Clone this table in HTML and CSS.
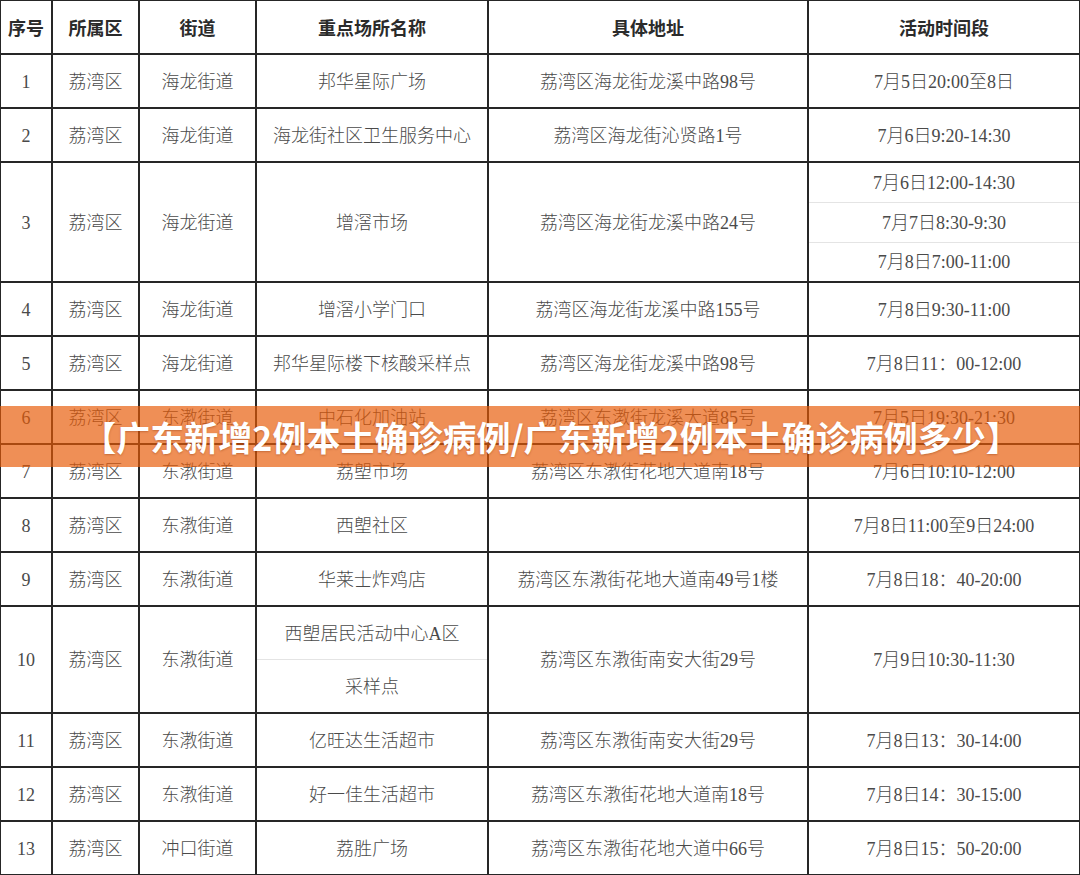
FILE: index.html
```html
<!DOCTYPE html>
<html lang="zh-CN">
<head>
<meta charset="utf-8">
<title>广东新增2例本土确诊病例</title>
<link rel="stylesheet" href="styles.css">
</head>
<body>
<div class="page">
  <table class="sheet">
    <colgroup>
      <col class="c-no"><col class="c-dist"><col class="c-street"><col class="c-place"><col class="c-addr"><col class="c-time">
    </colgroup>
    <thead>
      <tr class="r-head">
        <th>序号</th><th>所属区</th><th>街道</th><th>重点场所名称</th><th>具体地址</th><th>活动时间段</th>
      </tr>
    </thead>
    <tbody>
      <tr class="r"><td>1</td><td>荔湾区</td><td>海龙街道</td><td>邦华星际广场</td><td>荔湾区海龙街龙溪中路98号</td><td>7月5日20:00至8日</td></tr>
      <tr class="r"><td>2</td><td>荔湾区</td><td>海龙街道</td><td>海龙街社区卫生服务中心</td><td>荔湾区海龙街沁贤路1号</td><td>7月6日9:20-14:30</td></tr>
      <tr class="r-s3"><td rowspan="3">3</td><td rowspan="3">荔湾区</td><td rowspan="3">海龙街道</td><td rowspan="3">增滘市场</td><td rowspan="3">荔湾区海龙街龙溪中路24号</td><td class="sub-first">7月6日12:00-14:30</td></tr>
      <tr class="r-s3"><td class="sub-mid">7月7日8:30-9:30</td></tr>
      <tr class="r-s3"><td class="sub-last">7月8日7:00-11:00</td></tr>
      <tr class="r"><td>4</td><td>荔湾区</td><td>海龙街道</td><td>增滘小学门口</td><td>荔湾区海龙街龙溪中路155号</td><td>7月8日9:30-11:00</td></tr>
      <tr class="r"><td>5</td><td>荔湾区</td><td>海龙街道</td><td>邦华星际楼下核酸采样点</td><td>荔湾区海龙街龙溪中路98号</td><td>7月8日11：00-12:00</td></tr>
      <tr class="r"><td>6</td><td>荔湾区</td><td>东漖街道</td><td>中石化加油站</td><td>荔湾区东漖街龙溪大道85号</td><td>7月5日19:30-21:30</td></tr>
      <tr class="r"><td>7</td><td>荔湾区</td><td>东漖街道</td><td>荔塱市场</td><td>荔湾区东漖街花地大道南18号</td><td>7月6日10:10-12:00</td></tr>
      <tr class="r"><td>8</td><td>荔湾区</td><td>东漖街道</td><td>西塱社区</td><td></td><td>7月8日11:00至9日24:00</td></tr>
      <tr class="r"><td>9</td><td>荔湾区</td><td>东漖街道</td><td>华莱士炸鸡店</td><td>荔湾区东漖街花地大道南49号1楼</td><td>7月8日18：40-20:00</td></tr>
      <tr class="r-s2"><td rowspan="2">10</td><td rowspan="2">荔湾区</td><td rowspan="2">东漖街道</td><td class="sub-first">西塱居民活动中心A区</td><td rowspan="2">荔湾区东漖街南安大街29号</td><td rowspan="2">7月9日10:30-11:30</td></tr>
      <tr class="r-s2"><td class="sub-last">采样点</td></tr>
      <tr class="r"><td>11</td><td>荔湾区</td><td>东漖街道</td><td>亿旺达生活超市</td><td>荔湾区东漖街南安大街29号</td><td>7月8日13：30-14:00</td></tr>
      <tr class="r"><td>12</td><td>荔湾区</td><td>东漖街道</td><td>好一佳生活超市</td><td>荔湾区东漖街花地大道南18号</td><td>7月8日14：30-15:00</td></tr>
      <tr class="r"><td>13</td><td>荔湾区</td><td>冲口街道</td><td>荔胜广场</td><td>荔湾区东漖街花地大道中66号</td><td>7月8日15：50-20:00</td></tr>
    </tbody>
  </table>
  <div class="banner">【广东新增2例本土确诊病例/广东新增2例本土确诊病例多少】</div>
</div>
</body>
</html>
```

FILE: styles.css
```css
html, body {
  margin: 0;
  padding: 0;
  background: #ffffff;
}

.page {
  position: relative;
  width: 1080px;
  height: 875px;
  overflow: hidden;
  background: #ffffff;
}

.sheet {
  border-collapse: collapse;
  table-layout: fixed;
  width: 1080px;
  margin: -1px 0 0 -1px;
  font-family: "Liberation Serif", "Noto Sans CJK SC", serif;
  font-size: 18px;
  font-weight: 300;
  color: #4a4a4a;
}

.c-no { width: 52px; }
.c-dist { width: 87px; }
.c-street { width: 117px; }
.c-place { width: 232px; }
.c-addr { width: 320px; }
.c-time { width: 272px; }

.sheet th,
.sheet td {
  border: 2px solid #262626;
  padding: 3px 0 0 0;
  text-align: center;
  vertical-align: middle;
  white-space: nowrap;
  line-height: 1.2;
}

.sheet th {
  font-family: "Noto Sans CJK SC", sans-serif;
  font-weight: 700;
  color: #2b2b2b;
  font-size: 18px;
  padding-top: 2px;
}

.r-head { height: 54px; }
.r { height: 54px; }
.r-s3 { height: 40px; }
.r-s2 { height: 53.5px; }

.sheet td.sub-first { border-bottom: 1px solid #e4e4e4; }
.sheet td.sub-mid { border-top: 1px solid #e4e4e4; border-bottom: 1px solid #e4e4e4; }
.sheet td.sub-last { border-top: 1px solid #e4e4e4; }

.banner {
  position: absolute;
  left: 0;
  top: 406px;
  width: 1080px;
  height: 61px;
  box-sizing: border-box;
  padding-left: 22px;
  display: flex;
  align-items: center;
  justify-content: center;
  background: rgba(231, 90, 6, 0.68);
  color: #ffffff;
  font-family: "Noto Sans CJK SC", sans-serif;
  font-weight: 700;
  font-size: 34px;
  letter-spacing: 0;
  text-shadow: 0 1px 2px rgba(120, 40, 0, 0.35);
  white-space: nowrap;
}
```
